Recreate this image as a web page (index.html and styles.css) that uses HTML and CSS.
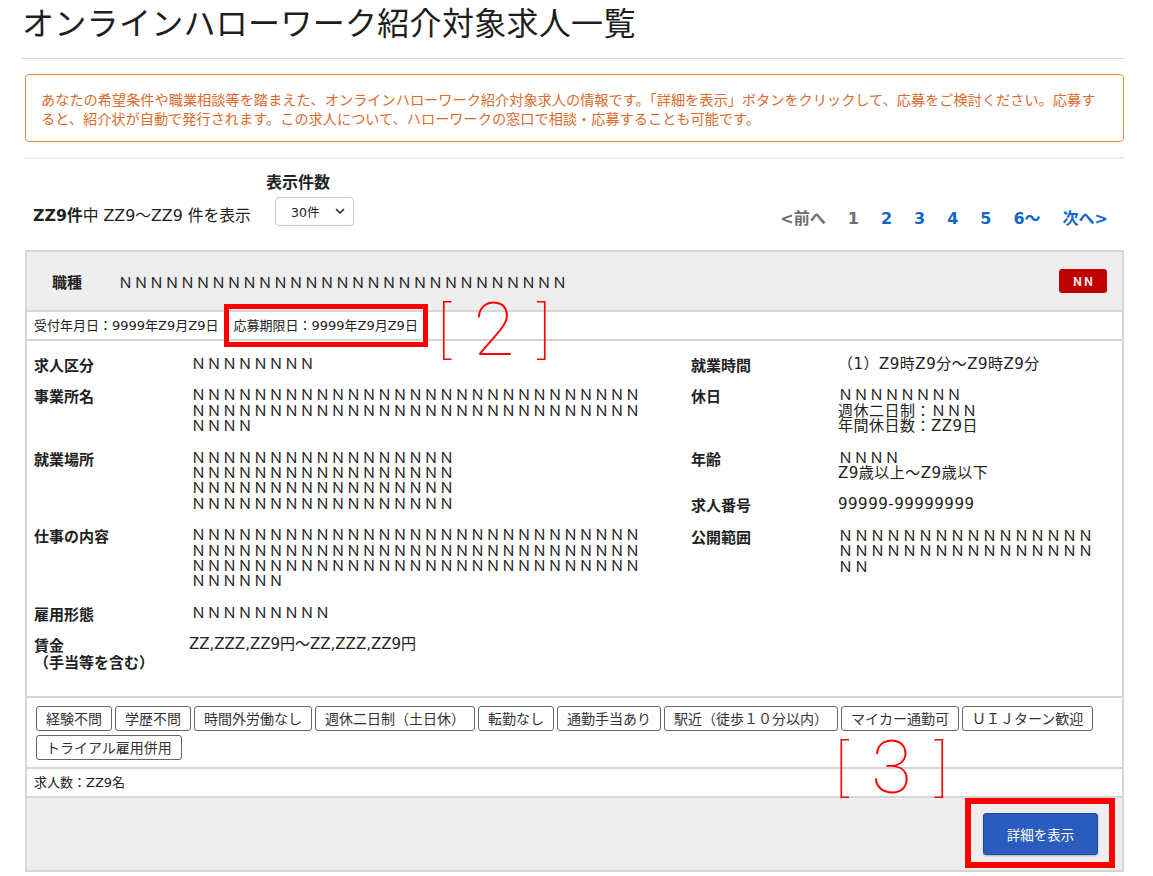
FILE: index.html
```html
<!DOCTYPE html>
<html lang="ja">
<head>
<meta charset="utf-8">
<title>オンラインハローワーク紹介対象求人一覧</title>
<link rel="stylesheet" href="styles.css">
</head>
<body>
<div class="page">
  <header class="page-head">
    <h1 class="title">オンラインハローワーク紹介対象求人一覧</h1>
  </header>

  <div class="notice">あなたの希望条件や職業相談等を踏まえた、オンラインハローワーク紹介対象求人の情報です。「詳細を表示」ボタンをクリックして、応募をご検討ください。応募す<br>ると、紹介状が自動で発行されます。この求人について、ハローワークの窓口で相談・応募することも可能です。</div>

  <div class="controls">
    <div class="result-count"><b>ZZ9件</b>中 ZZ9～ZZ9 件を表示</div>
    <div class="per-page">
      <div class="per-page-label">表示件数</div>
      <div class="select">
        <span>30件</span>
        <svg class="chev" width="10" height="7" viewBox="0 0 10 7"><polyline points="1,1 5,5 9,1" fill="none" stroke="#333" stroke-width="1.7"/></svg>
      </div>
    </div>
    <nav class="pager">
      <span class="pg off">&lt;前へ</span>
      <span class="pg off">1</span>
      <a class="pg">2</a>
      <a class="pg">3</a>
      <a class="pg">4</a>
      <a class="pg">5</a>
      <a class="pg">6～</a>
      <a class="pg">次へ&gt;</a>
    </nav>
  </div>

  <section class="card">
    <div class="card-head">
      <span class="head-label">職種</span>
      <span class="head-value">ＮＮＮＮＮＮＮＮＮＮＮＮＮＮＮＮＮＮＮＮＮＮＮＮＮＮＮＮＮ</span>
      <span class="badge">ＮＮ</span>
    </div>

    <div class="dates">
      <span class="date-item">受付年月日：9999年Z9月Z9日</span>
      <span class="date-item mark mark-2">応募期限日：9999年Z9月Z9日<span class="anno anno-2"><span>[</span><span class="num">2</span><span>]</span></span></span>
    </div>

    <div class="details">
      <dl class="col col-left">
        <dt>求人区分</dt><dd>ＮＮＮＮＮＮＮＮ</dd>
        <dt>事業所名</dt><dd>ＮＮＮＮＮＮＮＮＮＮＮＮＮＮＮＮＮＮＮＮＮＮＮＮＮＮＮＮＮ<br>ＮＮＮＮＮＮＮＮＮＮＮＮＮＮＮＮＮＮＮＮＮＮＮＮＮＮＮＮＮ<br>ＮＮＮＮ</dd>
        <dt>就業場所</dt><dd>ＮＮＮＮＮＮＮＮＮＮＮＮＮＮＮＮＮ<br>ＮＮＮＮＮＮＮＮＮＮＮＮＮＮＮＮＮ<br>ＮＮＮＮＮＮＮＮＮＮＮＮＮＮＮＮＮ<br>ＮＮＮＮＮＮＮＮＮＮＮＮＮＮＮＮＮ</dd>
        <dt>仕事の内容</dt><dd>ＮＮＮＮＮＮＮＮＮＮＮＮＮＮＮＮＮＮＮＮＮＮＮＮＮＮＮＮＮ<br>ＮＮＮＮＮＮＮＮＮＮＮＮＮＮＮＮＮＮＮＮＮＮＮＮＮＮＮＮＮ<br>ＮＮＮＮＮＮＮＮＮＮＮＮＮＮＮＮＮＮＮＮＮＮＮＮＮＮＮＮＮ<br>ＮＮＮＮＮＮ</dd>
        <dt>雇用形態</dt><dd>ＮＮＮＮＮＮＮＮＮ</dd>
        <dt class="two">賃金<br>（手当等を含む）</dt><dd class="plain">ZZ,ZZZ,ZZ9円～ZZ,ZZZ,ZZ9円</dd>
      </dl>
      <dl class="col col-right">
        <dt>就業時間</dt><dd>（1）Z9時Z9分～Z9時Z9分</dd>
        <dt>休日</dt><dd>ＮＮＮＮＮＮＮＮ<br>週休二日制：ＮＮＮ<br>年間休日数：ZZ9日</dd>
        <dt>年齢</dt><dd>ＮＮＮＮ<br>Z9歳以上～Z9歳以下</dd>
        <dt>求人番号</dt><dd>99999-99999999</dd>
        <dt>公開範囲</dt><dd class="wide">ＮＮＮＮＮＮＮＮＮＮＮＮＮＮＮＮ<br>ＮＮＮＮＮＮＮＮＮＮＮＮＮＮＮＮ<br>ＮＮ</dd>
      </dl>
    </div>

    <div class="tags">
      <span class="tag">経験不問</span>
      <span class="tag">学歴不問</span>
      <span class="tag">時間外労働なし</span>
      <span class="tag">週休二日制（土日休）</span>
      <span class="tag">転勤なし</span>
      <span class="tag">通勤手当あり</span>
      <span class="tag">駅近（徒歩１０分以内）</span>
      <span class="tag">マイカー通勤可</span>
      <span class="tag">ＵＩＪターン歓迎</span>
      <span class="tag">トライアル雇用併用</span>
    </div>

    <div class="count-row">求人数：ZZ9名</div>

    <div class="card-foot">
      <span class="mark mark-3"><button class="btn" type="button">詳細を表示</button></span>
    </div>

    <span class="anno anno-3"><span>[</span><span class="num">3</span><span>]</span></span>
  </section>
</div>
</body>
</html>
```

FILE: styles.css
```css
* { box-sizing: border-box; }

body {
  margin: 0;
  background: #fff;
  color: #222;
  font-family: "Noto Sans CJK JP", "Noto Sans", sans-serif;
}

.page {
  width: 1099px;
  margin-left: 25px;
}

/* ---------- title ---------- */
.page-head {
  margin-left: -3px;
  padding-bottom: 16px;
  border-bottom: 1px solid #dadada;
}

.title {
  margin: 0;
  font-size: 32px;
  font-weight: 400;
  line-height: 42px;
  color: #1e1e1e;
  letter-spacing: 0.3px;
}

/* ---------- notice ---------- */
.notice {
  margin-top: 15px;
  padding: 15px 15px 13px;
  border: 1px solid #e9874d;
  border-radius: 4px;
  color: #dc6a2c;
  font-size: 14.2px;
  line-height: 19px;
  white-space: nowrap;
}

/* ---------- controls ---------- */
.controls {
  margin-top: 15px;
  border-top: 2px solid #ececec;
  padding: 12px 16px 0 8px;
  margin-bottom: 24px;
  display: flex;
  align-items: flex-end;
}

.result-count {
  width: 233px;
  font-family: "DejaVu Sans", "Noto Sans CJK JP", sans-serif;
  font-size: 15.8px;
  line-height: 20px;
  white-space: nowrap;
  color: #222;
}
.result-count b { font-weight: 700; }

.per-page {
  display: flex;
  flex-direction: column;
  align-items: flex-start;
}

.per-page-label {
  font-size: 16px;
  font-weight: 700;
  line-height: 20px;
  margin-bottom: 6px;
}

.select {
  margin-left: 9px;
  width: 79px;
  height: 29px;
  border: 1px solid #c9c9c9;
  border-radius: 4px;
  display: flex;
  align-items: center;
  justify-content: space-between;
  padding: 0 8px 0 15px;
  font-family: "DejaVu Sans", "Noto Sans CJK JP", sans-serif;
  font-size: 12.5px;
  color: #222;
}

.pager {
  margin-left: auto;
  margin-bottom: -4px;
  display: flex;
  align-items: center;
  gap: 22px;
  font-family: "DejaVu Sans", "Noto Sans CJK JP", sans-serif;
  font-size: 16px;
  font-weight: 700;
  line-height: 22px;
}

.pg { color: #1166cc; text-decoration: none; }
.pg.off { color: #6e6e6e; }

/* ---------- card ---------- */
.card {
  position: relative;
  border: 2px solid #d6d6d6;
}

.card-head {
  height: 60px;
  background: #eeeeee;
  border-bottom: 2px solid #d6d6d6;
  display: flex;
  align-items: center;
  padding: 0 15px 0 25px;
}

.head-label {
  font-size: 15px;
  font-weight: 700;
  width: 66px;
}

.head-value {
  font-size: 15px;
  letter-spacing: 0.5px;
  color: #222;
}

.badge {
  margin-left: auto;
  width: 48px;
  height: 24px;
  border-radius: 3px;
  background: #c00000;
  color: #fff;
  font-size: 11px;
  font-weight: 700;
  display: flex;
  align-items: center;
  justify-content: center;
}

.dates {
  height: 29px;
  border-bottom: 2px solid #d6d6d6;
  padding-left: 7px;
  display: flex;
  gap: 15px;
  font-family: "DejaVu Sans", "Noto Sans CJK JP", sans-serif;
  font-size: 13px;
  line-height: 27px;
}

.mark { position: relative; display: inline-block; }

.mark-2::after {
  content: "";
  position: absolute;
  left: -9px;
  right: -10px;
  top: -8px;
  bottom: -8px;
  border: 5px solid #ff0000;
  pointer-events: none;
}

.anno {
  position: absolute;
  display: flex;
  align-items: center;
  gap: 23px;
  color: #ff0000;
  font-family: "Roboto", "Lato", sans-serif;
  font-weight: 100;
  font-size: 62px;
  line-height: 62px;
  white-space: nowrap;
}
.anno .num { font-size: 74px; }

.anno-2 {
  left: 204px;
  top: -13px;
}

.anno-3 {
  left: 808px;
  top: 485px;
}

/* ---------- details ---------- */
.details {
  display: grid;
  grid-template-columns: 657px 1fr;
  padding: 16px 0 26px 7px;
  border-bottom: 2px solid #d6d6d6;
}

.col {
  margin: 0;
  display: grid;
  row-gap: 16px;
  align-content: start;
}
.col-left { grid-template-columns: 157px 1fr; }
.col-right { grid-template-columns: 147px 1fr; }

.col dt {
  font-size: 15px;
  font-weight: 700;
  line-height: 15.4px;
  color: #222;
  white-space: nowrap;
}
.col dt.two { line-height: 16.5px; }

.col dd {
  margin: 0;
  font-family: "DejaVu Sans", "Noto Sans CJK JP", sans-serif;
  font-size: 15px;
  letter-spacing: 0.5px;
  line-height: 15.4px;
  color: #222;
  white-space: nowrap;
}
.col dd.plain { margin-left: -2px; letter-spacing: 0; }
.col dd.wide { letter-spacing: 1px; }

/* ---------- tags ---------- */
.tags {
  display: flex;
  flex-wrap: wrap;
  gap: 4px 3px;
  padding: 8px 9px 7px;
  border-bottom: 2px solid #d6d6d6;
}

.tag {
  height: 25px;
  padding: 0 9px;
  border: 1px solid #666;
  border-radius: 3px;
  font-size: 14px;
  line-height: 23px;
  color: #333;
  background: #fff;
  white-space: nowrap;
}

.count-row {
  height: 29px;
  border-bottom: 2px solid #d6d6d6;
  padding-left: 7px;
  font-family: "DejaVu Sans", "Noto Sans CJK JP", sans-serif;
  font-size: 13px;
  line-height: 27px;
}

/* ---------- footer ---------- */
.card-foot {
  background: #eeeeee;
  display: flex;
  justify-content: flex-end;
  padding: 15px 24px 15px;
}

.btn {
  display: block;
  width: 115px;
  height: 42px;
  background: #2a5cbe;
  border: 1px solid #1d4a9f;
  border-radius: 3px;
  color: #fff;
  font-family: "Noto Sans CJK JP", sans-serif;
  font-size: 13.5px;
  box-shadow: 0 1px 2px rgba(0,0,0,0.25);
}

.mark-3::after {
  content: "";
  position: absolute;
  left: -18px;
  right: -17px;
  top: -15px;
  bottom: -13px;
  border: 6px solid #ff0000;
  pointer-events: none;
}
```
